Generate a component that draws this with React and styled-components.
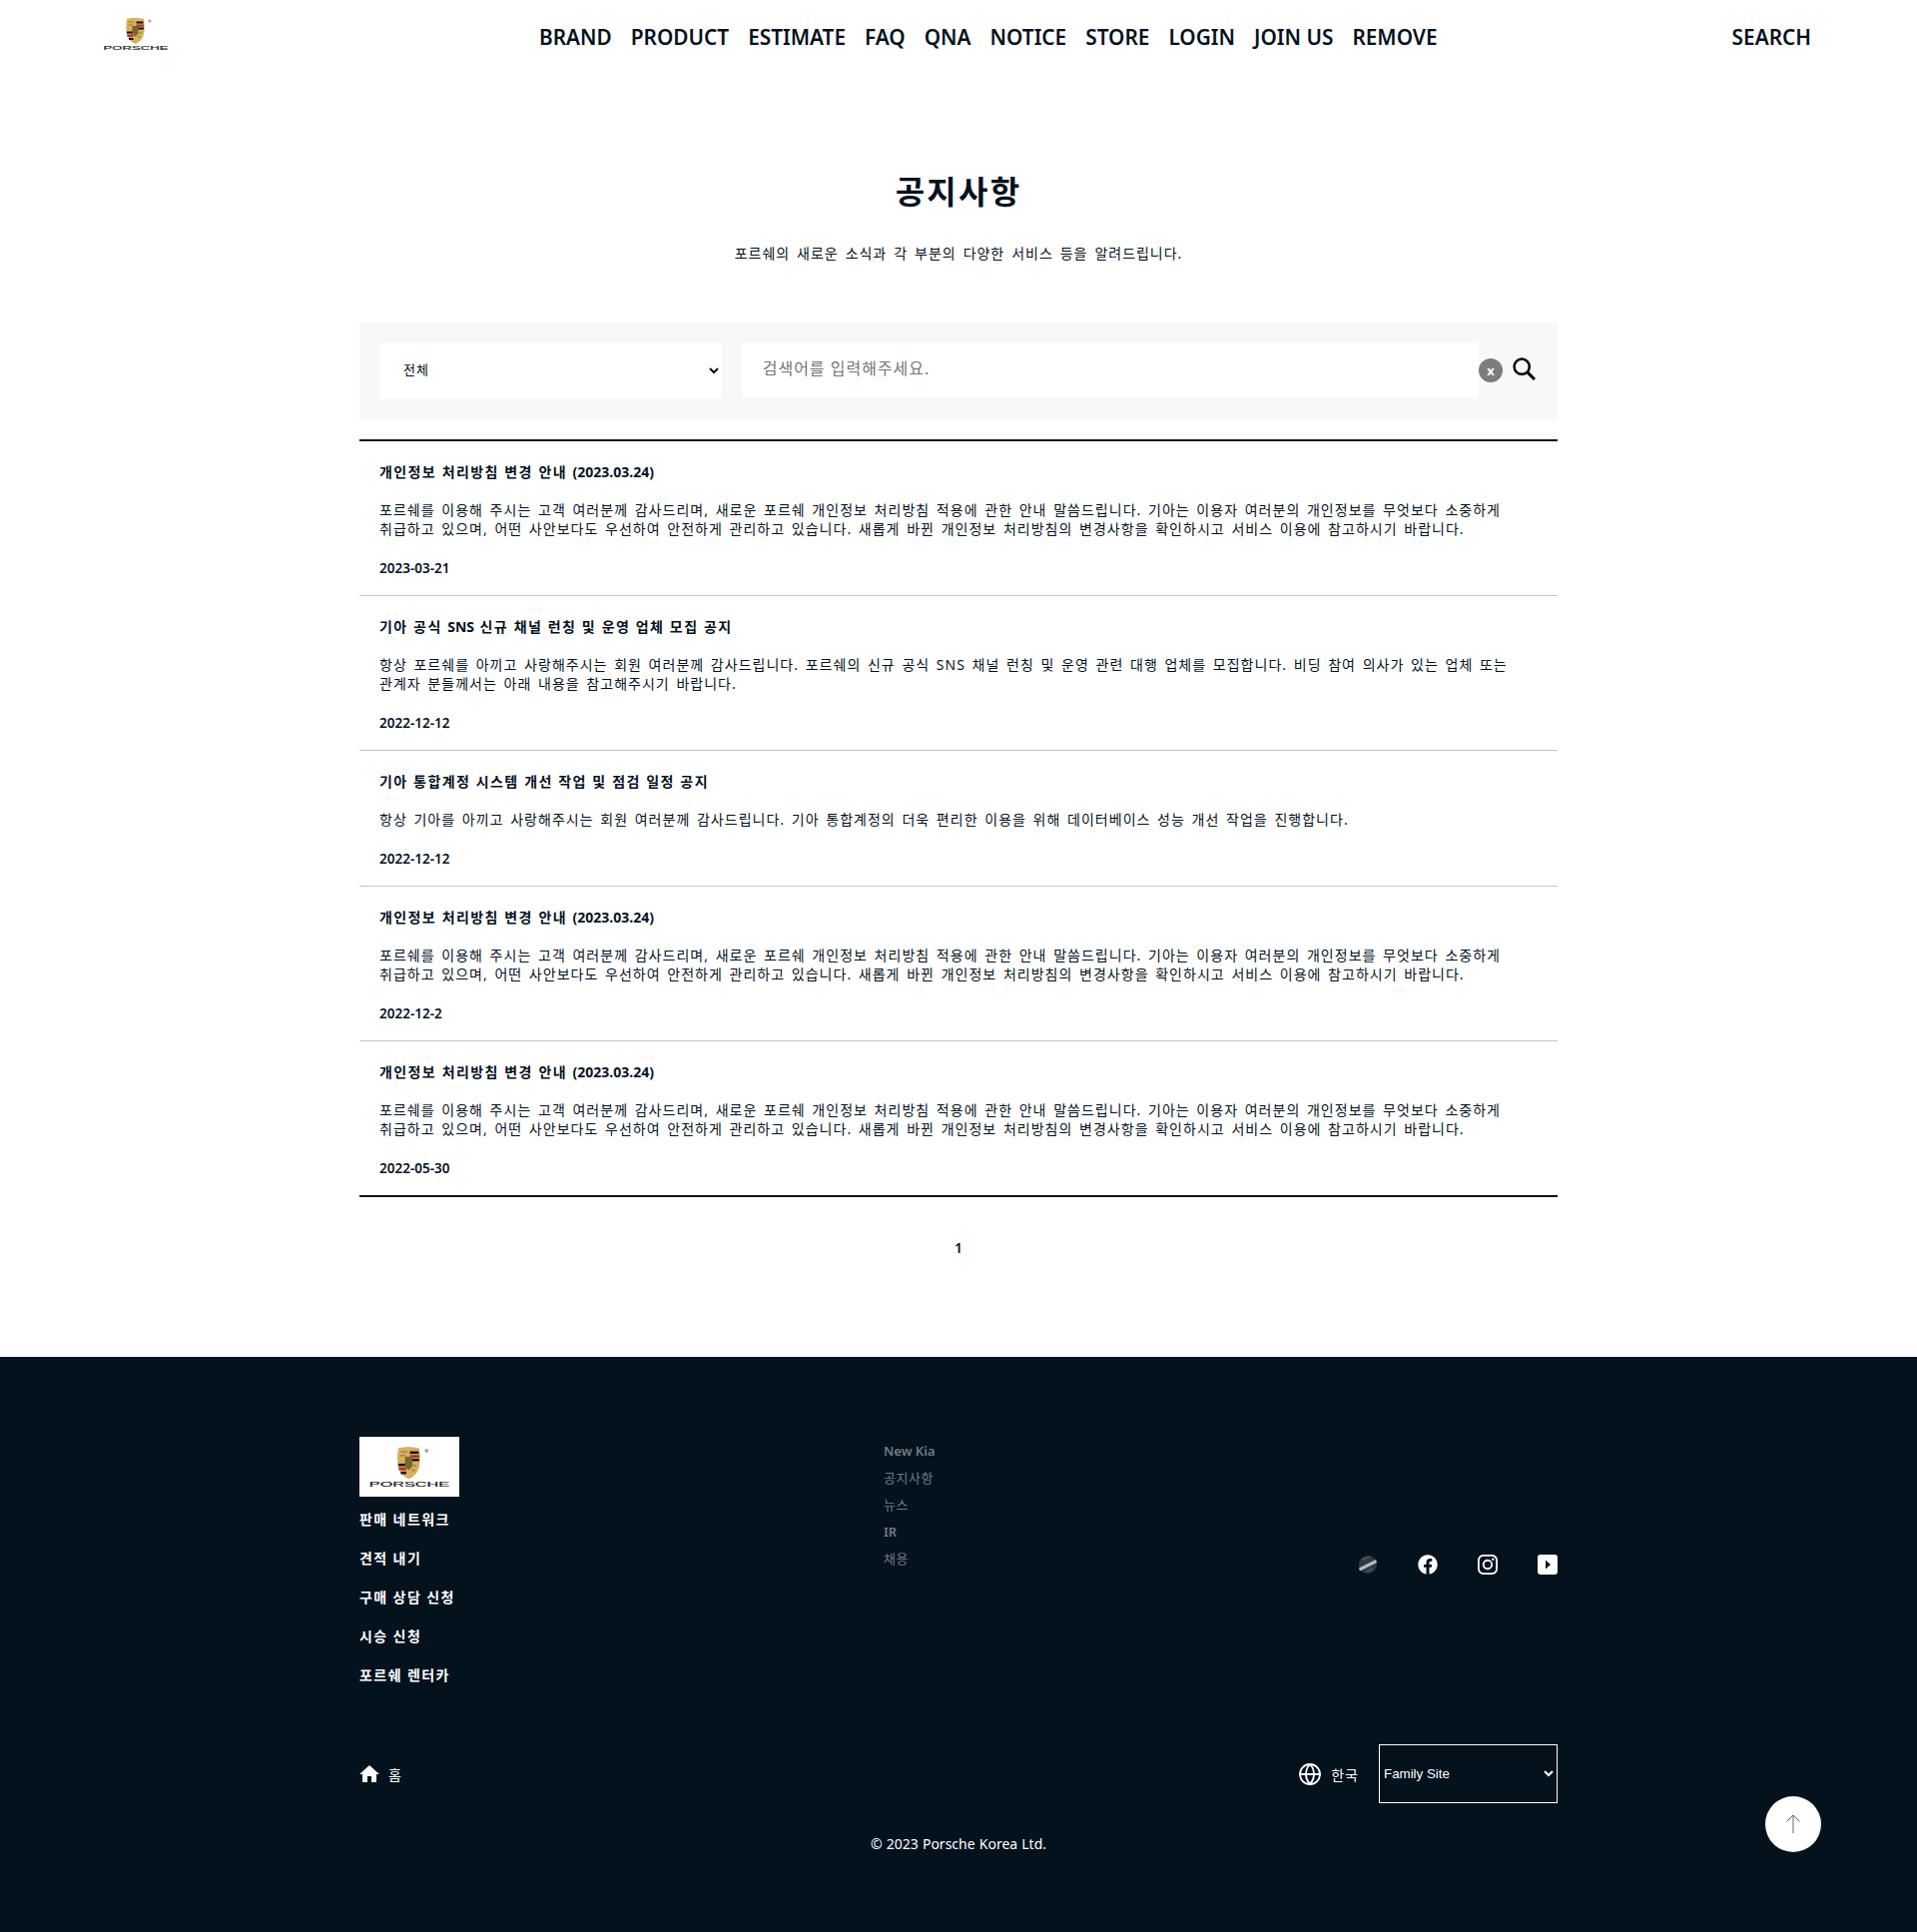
import React from 'react';
import styled, { createGlobalStyle } from 'styled-components';
import { FaFacebook } from 'react-icons/fa';
import { BsInstagram } from 'react-icons/bs';
import { Globe } from 'lucide-react';

const FONT = '"Noto Sans", "Noto Sans CJK KR", sans-serif';

const GlobalStyle = createGlobalStyle`
    html, body {
        margin: 0;
        padding: 0;
        background: #fff;
        font-family: ${FONT};
        color: #04121e;
    }
    ul { list-style: none; margin: 0; padding: 0; }
    p, h2, h3 { margin: 0; }
`;

const NAV = ['BRAND', 'PRODUCT', 'ESTIMATE', 'FAQ', 'QNA', 'NOTICE', 'STORE', 'LOGIN', 'JOIN US', 'REMOVE'];

const PRIVACY_TEXT = '포르쉐를 이용해 주시는 고객 여러분께 감사드리며, 새로운 포르쉐 개인정보 처리방침 적용에 관한 안내 말씀드립니다. 기아는 이용자 여러분의 개인정보를 무엇보다 소중하게 취급하고 있으며, 어떤 사안보다도 우선하여 안전하게 관리하고 있습니다. 새롭게 바뀐 개인정보 처리방침의 변경사항을 확인하시고 서비스 이용에 참고하시기 바랍니다.';

const NOTICES = [
    { title: '개인정보 처리방침 변경 안내 (2023.03.24)', text: PRIVACY_TEXT, date: '2023-03-21' },
    { title: '기아 공식 SNS 신규 채널 런칭 및 운영 업체 모집 공지', text: '항상 포르쉐를 아끼고 사랑해주시는 회원 여러분께 감사드립니다. 포르쉐의 신규 공식 SNS 채널 런칭 및 운영 관련 대행 업체를 모집합니다. 비딩 참여 의사가 있는 업체 또는 관계자 분들께서는 아래 내용을 참고해주시기 바랍니다.', date: '2022-12-12' },
    { title: '기아 통합계정 시스템 개선 작업 및 점검 일정 공지', text: '항상 기아를 아끼고 사랑해주시는 회원 여러분께 감사드립니다. 기아 통합계정의 더욱 편리한 이용을 위해 데이터베이스 성능 개선 작업을 진행합니다.', date: '2022-12-12' },
    { title: '개인정보 처리방침 변경 안내 (2023.03.24)', text: PRIVACY_TEXT, date: '2022-12-2' },
    { title: '개인정보 처리방침 변경 안내 (2023.03.24)', text: PRIVACY_TEXT, date: '2022-05-30' },
];

const FOOT_LINKS = ['판매 네트워크', '견적 내기', '구매 상담 신청', '시승 신청', '포르쉐 렌터카'];
const FOOT_SUB = ['New Kia', '공지사항', '뉴스', 'IR', '채용'];

// 한글만 자간을 넓히고 영문/숫자는 그대로 둔다
function Ko({ text }) {
    return text.split(/([A-Za-z0-9(][A-Za-z0-9().\- ]*[A-Za-z0-9)]|[A-Za-z0-9])/).map((part, i) => (
        i % 2 ? <LatinRun key={i}>{part}</LatinRun> : part
    ));
}

function PorscheLogo({ width, height }) {
    return (
        <svg width={width} height={height} viewBox="0 0 66 34">
            <path d="M24 2 C28 0.8 36 0.8 41 2 C42 9 42 14 40.5 19 C39 23 36 25.5 32.5 27 C29 25.5 26 23 24.5 19 C23 14 23 9 24 2 Z" fill="#d9b05c" />
            <rect x="33.5" y="4.5" width="7" height="2" fill="#111" />
            <rect x="33.5" y="7.5" width="7.6" height="2.2" fill="#b5322a" />
            <rect x="33.5" y="10.5" width="7.4" height="2" fill="#111" />
            <rect x="24" y="14.5" width="6" height="2" fill="#111" />
            <rect x="24.4" y="17.5" width="6" height="2.4" fill="#b5322a" />
            <rect x="26" y="21" width="4.5" height="2" fill="#111" />
            <path d="M29.5 9 L35.5 9 L35.5 16 C35 18 33.5 19 32.5 19.5 C31 19 30 18 29.5 16 Z" fill="#7a6630" />
            <path d="M26 5 L31 5 M25.5 8 L30 8 M35 16 L39 16 M35 20 L38 20" stroke="#9c7d36" strokeWidth="1" />
            <circle cx="47" cy="4" r="1.6" fill="#aaa" />
            <text x="0.5" y="33.4" fontFamily='"Liberation Sans", sans-serif' fontSize="5.5" fontWeight="400" fill="#222" stroke="#222" strokeWidth="0.15" textLength="65" lengthAdjust="spacingAndGlyphs">PORSCHE</text>
        </svg>
    );
}

export default function App() {
    return (
        <Page>
            <GlobalStyle />
            <Header>
                <LogoBox><PorscheLogo width={66} height={34} /></LogoBox>
                <Nav>
                    {NAV.map((n) => <NavItem key={n}>{n}</NavItem>)}
                </Nav>
                <NavItem>SEARCH</NavItem>
            </Header>

            <Main>
                <PageTitle>공지사항</PageTitle>
                <SubTitle>포르쉐의 새로운 소식과 각 부분의 다양한 서비스 등을 알려드립니다.</SubTitle>

                <SearchBar>
                    <CategorySelect defaultValue="all">
                        <option value="all">전체</option>
                    </CategorySelect>
                    <SearchInput placeholder="검색어를 입력해주세요." />
                    <ClearBtn>x</ClearBtn>
                    <SearchBtn>
                        <svg width="23" height="23" viewBox="0 0 23 23" fill="none" stroke="#000" strokeWidth="2.5">
                            <circle cx="9.2" cy="9.2" r="7.6" />
                            <path d="M14.6 14.6 L22 22" strokeWidth="3" />
                        </svg>
                    </SearchBtn>
                </SearchBar>

                <NoticeList>
                    {NOTICES.map((item, i) => (
                        <NoticeRow key={i}>
                            <NoticeTitle><Ko text={item.title} /></NoticeTitle>
                            <NoticeText>{item.text}</NoticeText>
                            <NoticeDate>{item.date}</NoticeDate>
                        </NoticeRow>
                    ))}
                </NoticeList>

                <Pager>1</Pager>
            </Main>

            <Footer>
                <FootInner>
                    <FootTop>
                        <FootCol>
                            <FootLogo><PorscheLogo width={82} height={42} /></FootLogo>
                            <FootLinks>
                                {FOOT_LINKS.map((l) => <li key={l}>{l}</li>)}
                            </FootLinks>
                        </FootCol>
                        <FootSub>
                            {FOOT_SUB.map((l) => <li key={l}><Ko text={l} /></li>)}
                        </FootSub>
                        <Socials>
                            <svg width="20" height="20" viewBox="0 0 20 20">
                                <circle cx="10" cy="10" r="9" fill="#2f3b44" />
                                <path d="M1 13.5 L18 5 L19 8 L2 16.5 Z" fill="#b9bec2" />
                                <path d="M4 5 L12 2 M8 17 L15 14" stroke="#59646c" strokeWidth="1" />
                            </svg>
                            <FaFacebook size={20} color="#fff" />
                            <BsInstagram size={20} color="#fff" />
                            <svg width="20" height="20" viewBox="0 0 20 20">
                                <rect width="20" height="20" rx="3" fill="#fff" />
                                <path d="M8 5.5 L13 10 L8 14.5 Z" fill="#04121e" />
                            </svg>
                        </Socials>
                    </FootTop>
                    <FootBottom>
                        <HomeLink>
                            <svg width="20" height="17" viewBox="0 0 20 17">
                                <path d="M10 0 L20 9 H17 V17 H12 V11 H8 V17 H3 V9 H0 Z" fill="#fff" />
                            </svg>
                            홈
                        </HomeLink>
                        <BottomRight>
                            <LangLink><Globe size={24} strokeWidth={1.8} color="#fff" />한국</LangLink>
                            <FamilySelect defaultValue="family">
                                <option value="family">Family Site</option>
                            </FamilySelect>
                        </BottomRight>
                    </FootBottom>
                    <Copyright>© 2023 Porsche Korea Ltd.</Copyright>
                </FootInner>
                <TopBtn>
                    <svg width="18" height="20" viewBox="0 0 18 20" fill="none" stroke="#666" strokeWidth="1">
                        <path d="M9 1 V19 M2.5 7.5 L9 1 L15.5 7.5" />
                    </svg>
                </TopBtn>
            </Footer>
        </Page>
    );
}

const LatinRun = styled.span`
    letter-spacing: 0;
`;

const Page = styled.div`
    width: 1920px;
    height: 1935px;
    overflow: hidden;
`;

const Header = styled.header`
    display: flex;
    align-items: flex-start;
    height: 74px;
    padding: 0 106px 0 103px;
`;

const LogoBox = styled.div`
    width: 437px;
    padding-top: 17px;
`;

const Nav = styled.nav`
    flex: 1;
    display: flex;
    gap: 19px;
`;

const NavItem = styled.span`
    font-size: 20.8px;
    font-weight: 600;
    line-height: 74px;
    color: #04121e;
`;

const Main = styled.main`
    width: 1200px;
    margin: 0 auto;
    height: 1285px;
    padding-top: 94px;
    box-sizing: border-box;
`;

const PageTitle = styled.h2`
    font-size: 32px;
    font-weight: 700;
    line-height: 48px;
    letter-spacing: 2.2px;
    text-align: center;
`;

const SubTitle = styled.p`
    margin-top: 28px;
    font-size: 14px;
    line-height: 20px;
    letter-spacing: 0.97px;
    word-spacing: 2.4px;
    text-align: center;
`;

const SearchBar = styled.div`
    display: flex;
    align-items: flex-start;
    margin-top: 59px;
    height: 97px;
    padding: 20px 22px 20px 20px;
    box-sizing: border-box;
    background: #f8f8f8;
`;

const CategorySelect = styled.select`
    width: 343px;
    height: 57px;
    padding: 0 4px 3px 20px;
    border: 0;
    background: #fff;
    font-family: ${FONT};
    font-size: 13px;
    letter-spacing: 1px;
    color: #04121e;
`;

const SearchInput = styled.input`
    width: 739px;
    height: 55px;
    margin-left: 20px;
    padding: 0 20px 3px 21px;
    box-sizing: border-box;
    border: 0;
    background: #fff;
    font-family: ${FONT};
    font-size: 16px;
    letter-spacing: 1px;
    &:focus { outline: none; }
`;

const ClearBtn = styled.button`
    width: 24px;
    height: 24px;
    margin-top: 16px;
    padding: 0;
    border: 0;
    border-radius: 50%;
    background: #7d7d7d;
    color: #fff;
    font-family: ${FONT};
    font-size: 13px;
    font-weight: 700;
    line-height: 20px;
`;

const SearchBtn = styled.button`
    width: 23px;
    height: 23px;
    margin: 15px 0 0 10px;
    padding: 0;
    border: 0;
    background: none;
`;

const NoticeList = styled.ul`
    margin-top: 20px;
    border-top: 2px solid #04121e;
    border-bottom: 2px solid #04121e;
`;

const NoticeRow = styled.li`
    padding: 21px 20px 17px;
    border-bottom: 1px solid #c4c4c4;
    &:last-child { border-bottom: 0; }
`;

const NoticeTitle = styled.h3`
    font-size: 14px;
    font-weight: 700;
    line-height: 20px;
    letter-spacing: 1.4px;
    word-spacing: 0.5px;
`;

const NoticeText = styled.p`
    margin-top: 18px;
    font-size: 14px;
    line-height: 19px;
    letter-spacing: 1.02px;
    word-spacing: 2px;
    word-break: keep-all;
`;

const NoticeDate = styled.p`
    margin-top: 20px;
    font-size: 13.5px;
    font-weight: 600;
    line-height: 20px;
`;

const Pager = styled.div`
    margin-top: 41px;
    font-size: 14px;
    font-weight: 600;
    line-height: 20px;
    text-align: center;
`;

const Footer = styled.footer`
    position: relative;
    height: 576px;
    background: #04121e;
`;

const FootInner = styled.div`
    width: 1200px;
    margin: 0 auto;
    padding-top: 80px;
`;

const FootTop = styled.div`
    display: flex;
    align-items: flex-start;
    height: 308px;
`;

const FootCol = styled.div`
    width: 525px;
`;

const FootLogo = styled.div`
    display: flex;
    align-items: center;
    justify-content: center;
    width: 100px;
    height: 60px;
    background: #fff;
`;

const FootLinks = styled.ul`
    margin-top: 13px;
    li {
        font-size: 14px;
        font-weight: 700;
        line-height: 20px;
        letter-spacing: 1.4px;
        color: #fff;
        margin-bottom: 19px;
    }
`;

const FootSub = styled.ul`
    flex: 1;
    padding-top: 4px;
    li {
        font-size: 13px;
        line-height: 20px;
        letter-spacing: 0.5px;
        color: #6f7a83;
        margin-bottom: 7px;
    }
    span {
        font-weight: 600;
    }
`;

const Socials = styled.div`
    display: flex;
    gap: 40px;
    margin-top: 118px;
`;

const FootBottom = styled.div`
    display: flex;
    align-items: center;
    justify-content: space-between;
    height: 59px;
`;

const HomeLink = styled.div`
    display: flex;
    align-items: center;
    gap: 9px;
    font-size: 14px;
    color: #fff;
`;

const BottomRight = styled.div`
    display: flex;
    align-items: center;
`;

const LangLink = styled.div`
    display: flex;
    align-items: center;
    gap: 9px;
    margin-right: 20px;
    font-size: 14px;
    letter-spacing: 1px;
    color: #fff;
`;

const FamilySelect = styled.select`
    width: 179px;
    height: 59px;
    border: 1px solid #fff;
    background: #04121e;
    color: #fff;
    font-family: "Liberation Sans", sans-serif;
    font-size: 13.33px;
`;

const Copyright = styled.p`
    margin-top: 31px;
    font-size: 14px;
    line-height: 20px;
    word-spacing: 0.5px;
    text-align: center;
    color: #fff;
`;

const TopBtn = styled.button`
    position: absolute;
    top: 440px;
    left: 1768px;
    display: flex;
    align-items: center;
    justify-content: center;
    width: 56px;
    height: 56px;
    padding: 0;
    border: 0;
    border-radius: 50%;
    background: #fff;
`;
